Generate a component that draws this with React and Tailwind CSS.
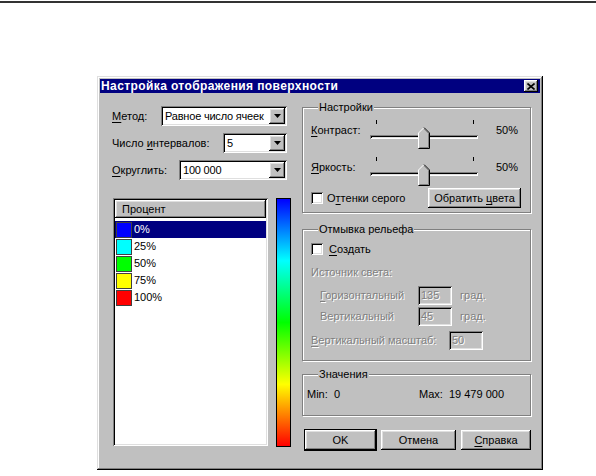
import React from "react"

const raised =
  "shadow-[inset_-1px_-1px_#000,inset_1px_1px_#fff,inset_-2px_-2px_#808080,inset_2px_2px_#dfdfdf]"
const sunken =
  "shadow-[inset_1px_1px_#808080,inset_-1px_-1px_#fff,inset_2px_2px_#000,inset_-2px_-2px_#dfdfdf]"
const disabled = "text-[#808080] [text-shadow:1px_1px_0_#fff]"

function U({ children }) {
  return <span className="underline underline-offset-[2px]">{children}</span>
}

function Arrow() {
  return (
    <svg width="7" height="4" viewBox="0 0 7 4">
      <path d="M0 0h7L3.5 4z" fill="#000" />
    </svg>
  )
}

function Combo({ width, value }) {
  return (
    <div className={`flex items-center h-[20px] bg-white ${sunken}`} style={{ width }}>
      <span className="flex-1 pl-[4px] leading-[13px] whitespace-nowrap tracking-[-0.2px]">{value}</span>
      <div className={`w-[16px] h-[16px] mr-[2px] shrink-0 flex items-center justify-center bg-[#c0c0c0] ${raised}`}>
        <Arrow />
      </div>
    </div>
  )
}

function Checkbox() {
  return <div className={`w-[12px] h-[12px] bg-white ${sunken}`} />
}

function Slider() {
  return (
    <div className="relative w-[108px] h-[30px]">
      <div className="absolute left-[6px] top-[1px] w-px h-[4px] bg-black" />
      <div className="absolute left-[103px] top-[1px] w-px h-[4px] bg-black" />
      <div className={`absolute left-0 right-0 top-[16px] h-[4px] ${sunken}`} />
      <svg className="absolute left-[48px] top-[8px]" width="12" height="22" viewBox="0 0 12 22">
        <path d="M6 0.5L11.5 6V21.5H0.5V6Z" fill="#c0c0c0" />
        <path d="M0.5 21V6L6 0.5" fill="none" stroke="#fff" />
        <path d="M6 0.5L11.5 6V21.5H0.5" fill="none" stroke="#000" />
        <path d="M6.3 2L10.5 6.3V20.5H1.5" fill="none" stroke="#808080" />
      </svg>
    </div>
  )
}

function DisabledInput({ value }) {
  return (
    <div className={`w-[34px] h-[19px] flex items-center pl-[3px] bg-[#c0c0c0] ${sunken}`}>
      <span className={disabled}>{value}</span>
    </div>
  )
}

function Group({ title, className, children }) {
  return (
    <fieldset
      className={`border border-[#808080] shadow-[inset_1px_1px_#fff,1px_1px_#fff] pl-[8px] pr-[9px] ${className}`}
    >
      <legend className="ml-[7px] px-[1px] leading-[12px] bg-[#c0c0c0]">{title}</legend>
      {children}
    </fieldset>
  )
}

function Button({ children, width, isDefault }) {
  return (
    <div
      className={`h-[20px] flex items-center justify-center bg-[#c0c0c0] ${raised} ${
        isDefault ? "outline outline-1 outline-black" : ""
      }`}
      style={{ width }}
    >
      {children}
    </div>
  )
}

const items = [
  { label: "0%", color: "bg-[#0000ff]", selected: true },
  { label: "25%", color: "bg-[#00ffff]" },
  { label: "50%", color: "bg-[#00ff00]" },
  { label: "75%", color: "bg-[#ffff00]" },
  { label: "100%", color: "bg-[#ff0000]" },
]

export default function App() {
  return (
    <div className="w-[596px] h-[476px] bg-white font-['Liberation_Sans',Arial,sans-serif] text-[11px] text-black overflow-hidden">
      <div className="mt-[1px] h-[2px] bg-[#333]" />

      <div
        className={`ml-[97px] mt-[73px] w-[446px] h-[394px] p-[3px] bg-[#c0c0c0] shadow-[inset_-1px_-1px_#000,inset_1px_1px_#dfdfdf,inset_-2px_-2px_#808080,inset_2px_2px_#fff]`}
      >
        {/* title bar */}
        <div className="h-[14px] bg-[#000080] flex items-center pl-[1px] pr-[2px]">
          <span className="flex-1 text-white font-bold text-[12px] tracking-[0.4px] leading-[13px] whitespace-nowrap">
            Настройка отображения поверхности
          </span>
          <div className={`w-[14px] h-[12px] flex items-center justify-center bg-[#c0c0c0] ${raised}`}>
            <svg width="8" height="7" viewBox="0 0 8 7">
              <path d="M0.5 0.5L7.5 6.5M7.5 0.5L0.5 6.5" stroke="#000" strokeWidth="1.6" />
            </svg>
          </div>
        </div>

        <div className="flex pl-[12px]">
          {/* left column */}
          <div className="w-[179px] mt-[13px]">
            <div className="flex items-center">
              <span className="w-[49px]">
                <U>М</U>етод:
              </span>
              <Combo width={126} value="Равное число ячеек" />
            </div>
            <div className="flex items-center mt-[7px]">
              <span className="w-[111px] whitespace-nowrap">
                Число <U>и</U>нтервалов:
              </span>
              <Combo width={64} value="5" />
            </div>
            <div className="flex items-center mt-[7px]">
              <span className="w-[67px]">
                <U>О</U>круглить:
              </span>
              <Combo width={108} value="100 000" />
            </div>

            <div className="flex mt-[18px]">
              <div className={`ml-[1px] w-[155px] h-[248px] bg-white p-[2px] ${sunken}`}>
                <div className={`h-[18px] flex items-center pl-[7px] bg-[#c0c0c0] ${raised}`}>Процент</div>
                <div className="mt-[3px]">
                  {items.map((it) => (
                    <div
                      key={it.label}
                      className={`flex items-center h-[17px] ${it.selected ? "bg-[#000080] text-white" : ""}`}
                    >
                      <div className={`ml-[1px] w-[16px] h-[16px] border border-[#404040] ${it.color}`} />
                      <span className="ml-[2px]">{it.label}</span>
                    </div>
                  ))}
                </div>
              </div>
              <div className="ml-[8px] w-[15px] h-[249px] border border-black bg-[linear-gradient(to_bottom,#0000ff,#00ffff,#00ff00,#ffff00,#ff0000)]" />
            </div>
          </div>

          {/* right column */}
          <div className="w-[229px] ml-[11px] mt-[8px]">
            <Group title="Настройки" className="pb-[2px]">
              <div className="flex items-start mt-[6px] h-[30px]">
                <span className="w-[59px] mt-[5px] leading-[13px]">
                  <U>К</U>онтраст:
                </span>
                <Slider />
                <span className="ml-[18px] mt-[5px] leading-[13px]">50%</span>
              </div>
              <div className="flex items-start mt-[7px] h-[30px]">
                <span className="w-[59px] mt-[5px] leading-[13px]">
                  <U>Я</U>ркость:
                </span>
                <Slider />
                <span className="ml-[18px] mt-[5px] leading-[13px]">50%</span>
              </div>
              <div className="flex items-center h-[24px]">
                <Checkbox />
                <span className="ml-[4px]">
                  О<U>т</U>тенки серого
                </span>
                <div className="ml-auto">
                  <Button width={93}>
                    Обратить <span className="ml-[3px]"><U>ц</U>вета</span>
                  </Button>
                </div>
              </div>
            </Group>

            <Group title="Отмывка рельефа" className="mt-[10px] pb-[10px]">
              <div className="flex items-center mt-[7px] h-[14px]">
                <Checkbox />
                <span className="ml-[6px]">
                  <U>С</U>оздать
                </span>
              </div>
              <div className={`mt-[10px] leading-[13px] ${disabled}`}>Источник света:</div>
              <div className="flex items-center mt-[7px] h-[19px] ml-[9px]">
                <span className={`w-[98px] ${disabled}`}>
                  <U>Г</U>оризонтальный
                </span>
                <DisabledInput value="135" />
                <span className={`ml-[8px] ${disabled}`}>град.</span>
              </div>
              <div className="flex items-center mt-[2px] h-[19px] ml-[9px]">
                <span className={`w-[98px] ${disabled}`}>Вертикальный</span>
                <DisabledInput value="45" />
                <span className={`ml-[8px] ${disabled}`}>град.</span>
              </div>
              <div className="flex items-center mt-[5px] h-[19px]">
                <span className={`w-[138px] whitespace-nowrap ${disabled}`}>
                  <U>В</U>ертикальный масштаб:
                </span>
                <DisabledInput value="50" />
              </div>
            </Group>

            <Group title="Значения" className="mt-[7px] pb-[14px]">
              <div className="flex mt-[8px] leading-[13px] -ml-[4px]">
                <span className="w-[112px]">Min:&nbsp; 0</span>
                <span>Max:&nbsp; 19 479 000</span>
              </div>
            </Group>

            <div className="flex mt-[14px] ml-[3px]">
              <Button width={71} isDefault>
                OK
              </Button>
              <div className="ml-[5px]">
                <Button width={75}>Отмена</Button>
              </div>
              <div className="ml-[5px]">
                <Button width={70}>
                  <U>С</U>правка
                </Button>
              </div>
            </div>
          </div>
        </div>
      </div>
    </div>
  )
}
